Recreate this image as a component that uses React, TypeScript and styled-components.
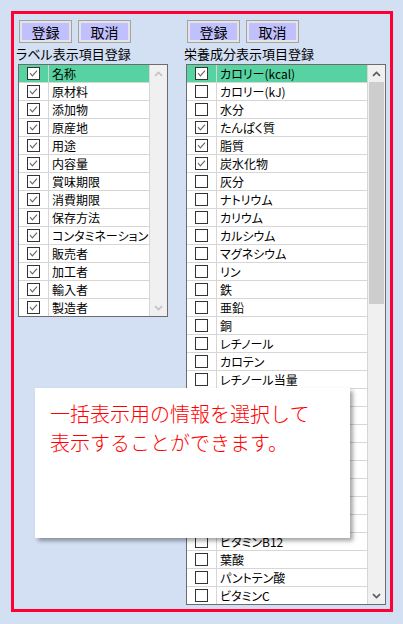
import React from 'react';
import styled, { createGlobalStyle } from 'styled-components';

const GlobalStyle = createGlobalStyle`
  body {
    margin: 0;
    background: #d3dff3;
    font-family: 'Noto Sans CJK JP', 'Noto Sans', sans-serif;
  }
`;

type Item = { name: string; checked: boolean };

const labelItems: Item[] = [
  '名称', '原材料', '添加物', '原産地', '用途', '内容量', '賞味期限', '消費期限',
  '保存方法', 'コンタミネーション', '販売者', '加工者', '輸入者', '製造者',
].map((name) => ({ name, checked: true }));

const nutritionChecked = ['カロリー(kcal)', 'たんぱく質', '脂質', '炭水化物'];
const nutritionItems: Item[] = [
  'カロリー(kcal)', 'カロリー(kJ)', '水分', 'たんぱく質', '脂質', '炭水化物', '灰分',
  'ナトリウム', 'カリウム', 'カルシウム', 'マグネシウム', 'リン', '鉄', '亜鉛', '銅',
  'レチノール', 'カロテン', 'レチノール当量', 'ビタミンD', 'ビタミンE', 'ビタミンK',
  'ビタミンB1', 'ビタミンB2', 'ナイアシン', 'ビタミンB6', 'ビオチン', 'ビタミンB12',
  '葉酸', 'パントテン酸', 'ビタミンC',
].map((name) => ({ name, checked: nutritionChecked.includes(name) }));

const Chevron: React.FC<{ down?: boolean; disabled?: boolean }> = ({ down, disabled }) => (
  <svg width="9" height="6" viewBox="0 0 9 6">
    <path
      d={down ? 'M1 1.2 L4.5 4.6 L8 1.2' : 'M1 4.8 L4.5 1.4 L8 4.8'}
      fill="none"
      stroke={disabled ? '#c4c4c4' : '#5f5f5f'}
      strokeWidth="1.8"
    />
  </svg>
);

const CheckList: React.FC<{
  items: Item[];
  width: number;
  thumb?: { top: number; height: number };
}> = ({ items, width, thumb }) => (
  <ListBox $width={width}>
    <ListBody>
      {items.map((item, i) => (
        <Row key={item.name} $selected={i === 0}>
          <CheckCell>
            <Box>
              {item.checked && (
                <svg width="11" height="11" viewBox="0 0 11 11">
                  <path d="M2 5.2 L4.4 7.8 L9 2.6" fill="none" stroke="#6a6a6a" strokeWidth="1.2" />
                </svg>
              )}
            </Box>
          </CheckCell>
          <TextCell>{item.name}</TextCell>
        </Row>
      ))}
    </ListBody>
    <ScrollBar>
      <ArrowButton>
        <Chevron disabled={!thumb} />
      </ArrowButton>
      <Track>
        {thumb && <Thumb style={{ marginTop: thumb.top, height: thumb.height }} />}
      </Track>
      <ArrowButton>
        <Chevron down disabled={!thumb} />
      </ArrowButton>
    </ScrollBar>
  </ListBox>
);

const App: React.FC = () => (
  <>
    <GlobalStyle />
    <Frame>
      <Columns>
        <Column $width={150}>
          <ButtonRow>
            <Button>登録</Button>
            <Button>取消</Button>
          </ButtonRow>
          <Caption>ラベル表示項目登録</Caption>
          <CheckList items={labelItems} width={150} />
        </Column>
        <Column $width={200}>
          <ButtonRow>
            <Button>登録</Button>
            <Button>取消</Button>
          </ButtonRow>
          <Caption>栄養成分表示項目登録</Caption>
          <CheckList items={nutritionItems} width={200} thumb={{ top: 0, height: 222 }} />
        </Column>
      </Columns>
      <Popup>
        <PopupText>
          一括表示用の情報を選択して
          <br />
          表示することができます。
        </PopupText>
      </Popup>
    </Frame>
  </>
);

export default App;

const Frame = styled.div`
  position: relative;
  box-sizing: border-box;
  margin: 11px;
  width: 382px;
  height: 601px;
  border: 3px solid #ff0033;
  overflow: hidden;
`;

const Columns = styled.div`
  display: flex;
  gap: 18px;
  padding: 6px 0 0 4px;
`;

const Column = styled.div<{ $width: number }>`
  display: flex;
  flex-direction: column;
  width: ${(p) => p.$width}px;
`;

const ButtonRow = styled.div`
  display: flex;
  gap: 6px;
  margin-left: 1px;
`;

const Button = styled.button`
  box-sizing: border-box;
  width: 53px;
  height: 23px;
  padding: 0;
  border: 1px solid #a3a3a3;
  box-shadow: inset 0 0 0 2px #e4e4e4;
  background: #c0c0ff;
  color: #000;
  font-family: 'Noto Sans CJK JP', sans-serif;
  font-size: 14px;
  line-height: 20px;
`;

const Caption = styled.div`
  margin-left: -2px;
  height: 21px;
  line-height: 21px;
  font-size: 13px;
  color: #000;
  white-space: nowrap;
  font-feature-settings: 'palt';
`;

const ListBox = styled.div<{ $width: number }>`
  display: flex;
  box-sizing: border-box;
  width: ${(p) => p.$width}px;
  border: 1px solid #6c6c6c;
  background: #fff;
`;

const ListBody = styled.div`
  flex: 1;
  min-width: 0;
`;

const Row = styled.div<{ $selected?: boolean }>`
  display: grid;
  grid-template-columns: 30px 1fr;
  box-sizing: border-box;
  height: 18px;
  border-bottom: 1px solid #d6d6d6;
  background: ${(p) => (p.$selected ? '#56d3a0' : '#fff')};
  &:last-child {
    border-bottom: none;
    height: 17px;
  }
`;

const CheckCell = styled.div`
  display: flex;
  align-items: center;
  justify-content: center;
  border-right: 1px solid #d6d6d6;
`;

const Box = styled.div`
  box-sizing: border-box;
  width: 13px;
  height: 13px;
  border: 1px solid #333;
  background: #fff;
  display: flex;
  align-items: center;
  justify-content: center;
`;

const TextCell = styled.div`
  padding-left: 3px;
  font-size: 12px;
  line-height: 17px;
  color: #000;
  white-space: nowrap;
  overflow: hidden;
  font-feature-settings: 'palt';
`;

const ScrollBar = styled.div`
  display: flex;
  flex-direction: column;
  width: 17px;
  background: #f0f0f0;
  border-left: 1px solid #d6d6d6;
`;

const ArrowButton = styled.div`
  display: flex;
  align-items: center;
  justify-content: center;
  height: 17px;
`;

const Track = styled.div`
  flex: 1;
  display: flex;
  flex-direction: column;
  align-items: center;
`;

const Thumb = styled.div`
  width: 15px;
  background: #cdcdcd;
`;

const Popup = styled.div`
  position: absolute;
  left: 21px;
  top: 374px;
  box-sizing: border-box;
  width: 315px;
  height: 150px;
  padding: 11px 0 0 15px;
  background: #fff;
  box-shadow: 3px 3px 4px rgba(0, 0, 0, 0.35);
`;

const PopupText = styled.p`
  margin: 0;
  color: #ff0000;
  font-size: 20px;
  line-height: 29px;
  font-weight: 300;
  white-space: nowrap;
`;
